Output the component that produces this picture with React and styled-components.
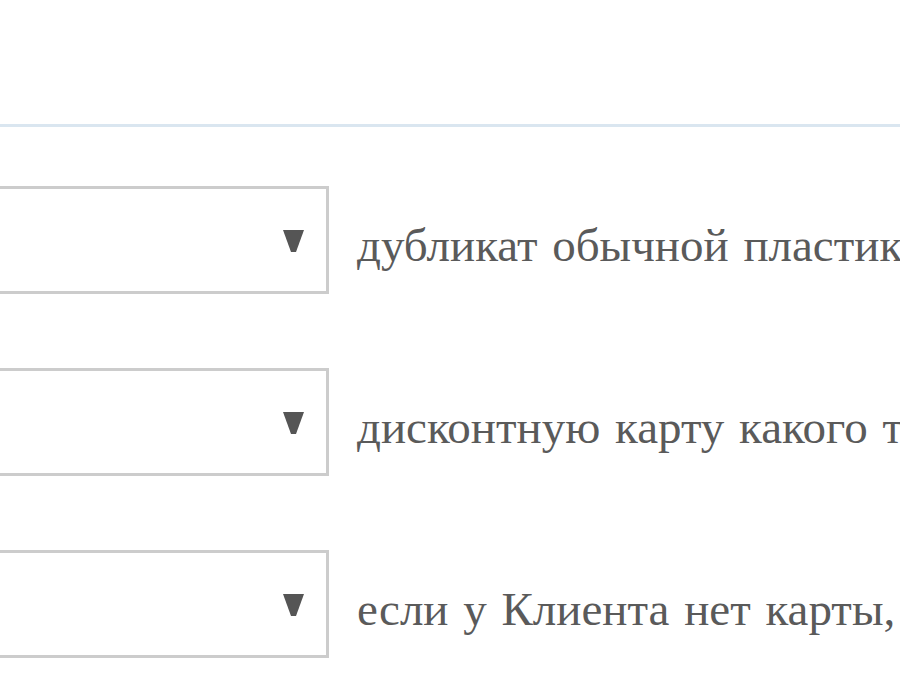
import React from "react";
import styled, { createGlobalStyle } from "styled-components";

const Global = createGlobalStyle`
  html, body {
    margin: 0;
    padding: 0;
    background: #ffffff;
    overflow: hidden;
  }
  body {
    width: 900px;
    height: 700px;
  }
`;

const Page = styled.div`
  width: 900px;
  height: 700px;
  padding-top: 124px;
  box-sizing: border-box;
  overflow: hidden;
  font-family: "Liberation Serif", "Times New Roman", serif;
`;

const Rule = styled.div`
  height: 3px;
  width: 100%;
  background: #dae6f0;
`;

const List = styled.div`
  margin-top: 59px;
  display: flex;
  flex-direction: column;
  gap: 74px;
`;

const Row = styled.div`
  display: flex;
  align-items: center;
  gap: 28px;
  white-space: nowrap;
`;

const SelectBox = styled.div`
  flex: 0 0 auto;
  width: 329px;
  height: 108px;
  box-sizing: border-box;
  border: 3px solid #cccccc;
  border-left: none;
  background: #ffffff;
  display: flex;
  align-items: center;
  justify-content: flex-end;
  padding-right: 22px;
`;

const Arrow = styled.svg`
  width: 21px;
  height: 22px;
  display: block;
  margin-top: 2px;
`;

const Label = styled.span`
  font-size: 47px;
  word-spacing: 3px;
  color: #5a5a5a;
  line-height: 1;
  margin-top: 10px;
`;

const rows = [
  "дубликат обычной пластиковой карты",
  "дисконтную карту какого торгового центра",
  "если у Клиента нет карты, то ничего",
];

export default function App() {
  return (
    <>
      <Global />
      <Page>
        <Rule />
        <List>
          {rows.map((text) => (
            <Row key={text}>
              <SelectBox>
                <Arrow viewBox="0 0 21 22">
                  <polygon points="0,0 21,0 13,22 8,22" fill="#555555" />
                </Arrow>
              </SelectBox>
              <Label>{text}</Label>
            </Row>
          ))}
        </List>
      </Page>
    </>
  );
}
